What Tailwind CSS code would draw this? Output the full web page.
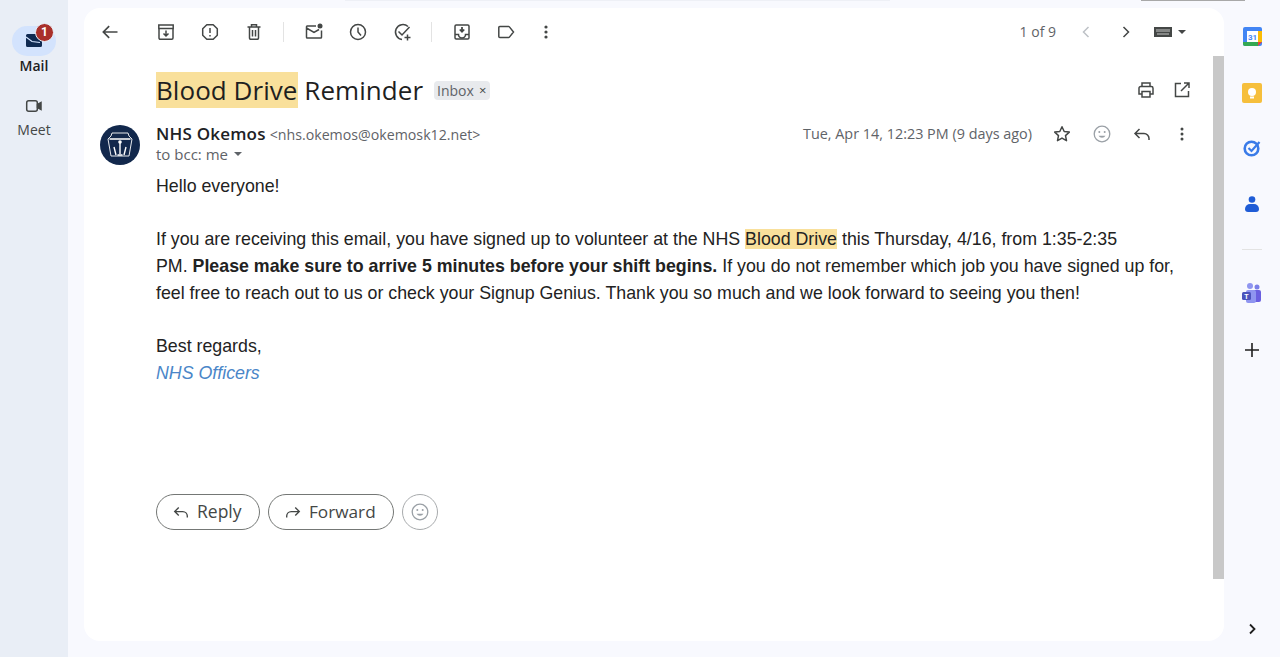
<!DOCTYPE html>
<html lang="en">
<head>
<meta charset="UTF-8" />
<title>Blood Drive Reminder</title>
<script src="https://cdn.jsdelivr.net/npm/@tailwindcss/browser@4"></script>
</head>
<body class="h-[657px] w-[1280px] overflow-hidden flex bg-[#f8f9fe] font-['Roboto',sans-serif] text-[#202124]">

  <!-- left rail -->
  <nav class="w-[68px] h-full bg-[#e9eef6] flex flex-col items-center pt-[26px] shrink-0">
    <div class="relative w-[44px] h-[30px] rounded-full bg-[#d3e3fd] flex items-center justify-center">
      <svg class="-mt-[1px]" width="16" height="13" viewBox="0 0 16 13"><path d="M0 1.500A1.500 1.500 0 0 1 1.500 0h13A1.500 1.500 0 0 1 16 1.500v10a1.500 1.500 0 0 1-1.500 1.500h-13A1.500 1.500 0 0 1 0 11.500z" fill="#0f2a52"/><path d="M0 3l6 4.500 8 1" fill="none" stroke="#d3e3fd" stroke-width="1.200"/></svg>
      <span class="absolute left-[24px] top-[-2px] w-[17px] h-[17px] rounded-full bg-[#a9302a] text-white text-[12px] font-bold leading-[17px] text-center border border-[#e9eef6] box-content -m-px">1</span>
    </div>
    <span class="font-['Open_Sans',sans-serif] text-[14px] font-semibold leading-[20px] text-[#1f1f1f]">Mail</span>
    <svg class="mt-[20px]" width="20" height="20" viewBox="0 0 20 20" fill="none" stroke="#444746" stroke-width="1.500"><rect x="2.700" y="4.700" width="10.600" height="10.600" rx="2"/><path d="M13.500 8.500l3.500-2v7l-3.500-2z" fill="#444746"/></svg>
    <span class="font-['Open_Sans',sans-serif] text-[14px] leading-[20px] mt-[4px] text-[#444746]">Meet</span>
  </nav>

  <!-- message card -->
  <main class="relative mt-[8px] ml-[16px] w-[1140px] h-[633px] bg-white rounded-[16px] overflow-hidden shrink-0">
    <!-- toolbar -->
    <div class="h-[48px] flex items-center pl-[16px] pr-[38px] text-[#444746]">
      <svg width="20" height="20" viewBox="0 0 24 24" fill="none" stroke="#444746" stroke-width="2"><path d="M21 12H4.500M11 5l-7 7 7 7"/></svg>
      <div class="flex items-center gap-[24px] ml-[36px]">
        <svg width="20" height="20" viewBox="0 0 20 20" fill="none" stroke="#444746" stroke-width="1.500"><path d="M3 6.500V16a1.200 1.200 0 0 0 1.200 1.200h11.600A1.200 1.200 0 0 0 17 16V6.500M2.800 3h14.400v3.500H2.800zM10 8.500v5M7.500 11.500l2.500 2.500 2.500-2.500"/></svg>
        <svg width="20" height="20" viewBox="0 0 20 20" fill="none" stroke="#444746" stroke-width="1.500"><path d="M6.800 2.700h6.400l4.100 4.100v6.400l-4.100 4.100H6.800l-4.100-4.100V6.800z" stroke-linejoin="round"/><path d="M10 6v5M10 13v1.500"/></svg>
        <svg width="20" height="20" viewBox="0 0 20 20" fill="none" stroke="#444746" stroke-width="1.500"><path d="M3.500 5h13M5.500 5v11a1.200 1.200 0 0 0 1.200 1.200h6.600a1.200 1.200 0 0 0 1.200-1.200V5M7.500 5V2.800h5V5M8.500 8v6.500M11.500 8v6.500"/></svg>
      </div>
      <div class="w-px h-[20px] bg-[#e3e3e3] ml-[19px] mr-[20px]"></div>
      <div class="flex items-center gap-[24px]">
        <svg width="20" height="20" viewBox="0 0 20 20" fill="none" stroke="#444746" stroke-width="1.500"><path d="M12 4H3.200A.8.800 0 0 0 2.500 4.800v10.400a.8.800 0 0 0 .8.800h13.400a.8.800 0 0 0 .8-.8V8.500M2.500 6l7.500 4.500L15 7.500"/><circle cx="16" cy="4" r="2.500" fill="#444746" stroke="none"/></svg>
        <svg width="20" height="20" viewBox="0 0 20 20" fill="none" stroke="#444746" stroke-width="1.500"><circle cx="10" cy="10" r="7.500"/><path d="M10 5.500V10l3 3.500"/></svg>
        <svg width="20" height="20" viewBox="0 0 20 20" fill="none" stroke="#444746" stroke-width="1.500"><path d="M16 4.500A7.500 7.500 0 1 0 10 17.500M6.500 9.500L10 13l7.500-8M15.500 12.500v6M12.500 15.500h6"/></svg>
      </div>
      <div class="w-px h-[20px] bg-[#e3e3e3] ml-[19px] mr-[20px]"></div>
      <div class="flex items-center gap-[24px]">
        <svg width="20" height="20" viewBox="0 0 20 20" fill="none" stroke="#444746" stroke-width="1.500"><rect x="3" y="3" width="14" height="14" rx="1.200"/><path d="M3 12.500h3.500a3.500 3.500 0 0 0 7 0H17"/><path d="M10 5v4.500M7.800 7.500L10 9.800l2.200-2.300" stroke-width="1.800"/></svg>
        <svg width="20" height="20" viewBox="0 0 20 20" fill="none" stroke="#444746" stroke-width="1.500"><path d="M3.800 4.500h8.800a1 1 0 0 1 .8.400L17.500 10l-4.100 5.100a1 1 0 0 1-.8.400H3.800a1 1 0 0 1-1-1v-9a1 1 0 0 1 1-1z"/></svg>
        <svg class="-ml-[4px]" width="20" height="20" viewBox="0 0 20 20" fill="#444746"><circle cx="10" cy="5" r="1.600"/><circle cx="10" cy="10" r="1.600"/><circle cx="10" cy="15" r="1.600"/></svg>
      </div>
      <span class="ml-auto -mt-[2px] font-['Open_Sans',sans-serif] text-[14px] text-[#5f6368]">1 of 9</span>
      <svg class="ml-[20px]" width="20" height="20" viewBox="0 0 20 20" fill="none" stroke="#bdc1c6" stroke-width="1.500"><path d="M12.500 5l-5 5 5 5"/></svg>
      <svg class="ml-[20px]" width="20" height="20" viewBox="0 0 20 20" fill="none" stroke="#444746" stroke-width="1.500"><path d="M7.500 5l5 5-5 5"/></svg>
      <svg class="ml-[18px]" width="18" height="10" viewBox="0 0 18 10"><rect width="18" height="10" fill="#444746"/><path d="M3 2v3M5 2v3M7 2v3M9 2v3M11 2v3M13 2v3M15 2v3M3 7h12" stroke="#fff" stroke-width=".7"/></svg>
      <span class="ml-[6px] w-0 h-0 border-x-[4px] border-x-transparent border-t-[4px] border-t-[#444746]"></span>
    </div>

    <!-- subject -->
    <div class="flex items-center h-[34px] mt-[17px] pl-[72px] pr-[32px]">
      <h1 class="text-[26px] tracking-[0.05px] leading-[34px] font-['Open_Sans',sans-serif] text-[#1f1f1f]"><span class="bg-[#f9e09b]">Blood Drive</span> Reminder</h1>
      <span class="ml-[11px] h-[19px] rounded-[4px] bg-[#e8eaed] pl-[3px] pr-[4px] flex items-center gap-[5px] font-['Open_Sans',sans-serif] text-[14px] text-[#5f6368]">Inbox <span class="text-[13px] leading-none text-[#444746]">×</span></span>
      <svg class="ml-auto" width="20" height="20" viewBox="0 0 20 20" fill="none" stroke="#444746" stroke-width="1.500"><path d="M6 6.500V3h8v3.500M6 14H3V8.200a1.700 1.700 0 0 1 1.700-1.700h10.600A1.700 1.700 0 0 1 17 8.200V14h-3M6 11.500h8V17H6z"/></svg>
      <svg class="ml-[16px]" width="20" height="20" viewBox="0 0 20 20" fill="none" stroke="#444746" stroke-width="1.500"><path d="M9 3.500H3.500v13h13V11M12 3h5v5M17 3l-8 8"/></svg>
    </div>

    <!-- sender -->
    <div class="flex pl-[16px] pr-[32px] mt-[18px] h-[40px]">
      <svg class="shrink-0" width="40" height="40" viewBox="0 0 40 40"><circle cx="20" cy="20" r="20" fill="#12284c"/><path d="M12 8h16l1 3 3 3-3 17H11L8 14l3-3z" fill="none" stroke="#fff" stroke-width=".9"/><path d="M9.500 14h21" stroke="#fff" stroke-width="1.300"/><path d="M20 17v12M17.500 30h5M14 22l2 8M26 22l-2 8" stroke="#fff" stroke-width="1.400"/><circle cx="20" cy="17" r="1.800" fill="#fff"/></svg>
      <div class="ml-[16px] flex flex-col font-['Open_Sans',sans-serif]">
        <div class="h-[20px] -mt-[1px] flex items-baseline leading-[20px]">
          <span class="text-[17px] tracking-[0.2px] font-semibold text-[#202124]">NHS Okemos</span>
          <span class="ml-[4px] text-[14.200px] text-[#5f6368]">&lt;nhs.okemos@okemosk12.net&gt;</span>
        </div>
        <div class="flex items-center h-[20px] text-[15px] text-[#5f6368]">to bcc: me<span class="ml-[6px] w-0 h-0 border-x-[4px] border-x-transparent border-t-[4px] border-t-[#5f6368]"></span></div>
      </div>
      <div class="ml-auto flex items-start h-[20px]">
        <span class="font-['Open_Sans',sans-serif] text-[14.400px] -mt-[1px] leading-[20px] text-[#5f6368]">Tue, Apr 14, 12:23 PM (9 days ago)</span>
        <svg class="ml-[20px] -mt-[1px]" width="20" height="20" viewBox="0 0 20 20" fill="none" stroke="#444746" stroke-width="1.500"><path d="M10 2.800l2.200 4.700 5.100.6-3.800 3.500 1 5.100-4.500-2.600-4.500 2.600 1-5.100L2.700 8.100l5.100-.6z" stroke-linejoin="round"/></svg>
        <svg class="ml-[20px] -mt-[1px]" width="20" height="20" viewBox="0 0 20 20" fill="none" stroke="#9aa0a6" stroke-width="1.300"><circle cx="10" cy="10" r="7.800"/><circle cx="7.300" cy="8" r="1" fill="#9aa0a6" stroke="none"/><circle cx="12.700" cy="8" r="1" fill="#9aa0a6" stroke="none"/><path d="M6.500 11.800a4 4 0 0 0 7 0z" fill="#9aa0a6" stroke="none"/></svg>
        <svg class="ml-[20px] -mt-[1px]" width="20" height="20" viewBox="0 0 20 20" fill="none" stroke="#444746" stroke-width="1.500"><path d="M7.500 5L3 9.500 7.500 14M3 9.500h9a5 5 0 0 1 5 5V16"/></svg>
        <svg class="ml-[20px] -mt-[1px]" width="20" height="20" viewBox="0 0 20 20" fill="#444746"><circle cx="10" cy="5" r="1.500"/><circle cx="10" cy="10" r="1.500"/><circle cx="10" cy="15" r="1.500"/></svg>
      </div>
    </div>

    <!-- body -->
    <div class="pl-[72px] w-[1110px] mt-[8px] font-['Liberation_Sans',sans-serif] text-[17.800px] leading-[26.700px] text-[#222222]">
      <p>Hello everyone!</p>
      <p class="mt-[26.700px]">If you are receiving this email, you have signed up to volunteer at the NHS <span class="bg-[#f9e09b]">Blood Drive</span> this Thursday, 4/16, from 1:35-2:35<br />PM. <b>Please make sure to arrive 5 minutes before your shift begins.</b> If you do not remember which job you have signed up for, feel free to reach out to us or check your Signup Genius. Thank you so much and we look forward to seeing you then!</p>
      <p class="mt-[26.700px]">Best regards,</p>
      <p class="italic text-[#4a86c8]">NHS Officers</p>
    </div>

    <!-- reply actions -->
    <div class="flex items-center gap-[8px] pl-[72px] mt-[107px] font-['Open_Sans',sans-serif]">
      <button class="h-[36px] w-[104px] rounded-full border border-[#747775] flex items-center pl-[15px] text-[17.500px] font-medium text-[#444746]">
        <svg width="18" height="18" viewBox="0 0 20 20" fill="none" stroke="#444746" stroke-width="1.500"><path d="M7.500 5L3 9.500 7.500 14M3 9.500h9a5 5 0 0 1 5 5V16"/></svg>
        <span class="ml-[7px]">Reply</span>
      </button>
      <button class="h-[36px] w-[126px] rounded-full border border-[#747775] flex items-center pl-[15px] text-[17.200px] font-medium text-[#444746]">
        <svg width="18" height="18" viewBox="0 0 20 20" fill="none" stroke="#444746" stroke-width="1.500"><path d="M12.500 5L17 9.500 12.500 14M17 9.500H8a5 5 0 0 0-5 5V16"/></svg>
        <span class="ml-[7px]">Forward</span>
      </button>
      <button class="w-[36px] h-[36px] rounded-full border border-[#a8abad] flex items-center justify-center">
        <svg width="20" height="20" viewBox="0 0 20 20" fill="none" stroke="#9aa0a6" stroke-width="1.300"><circle cx="10" cy="10" r="7.800"/><circle cx="7.300" cy="8" r="1" fill="#9aa0a6" stroke="none"/><circle cx="12.700" cy="8" r="1" fill="#9aa0a6" stroke="none"/><path d="M6.500 11.800a4 4 0 0 0 7 0z" fill="#9aa0a6" stroke="none"/></svg>
      </button>
    </div>

    <!-- scrollbar thumb -->
    <div class="absolute right-0 top-[48px] w-[11px] h-[523px] bg-[#c8c8c8]"></div>
  </main>

  <!-- right add-on rail -->
  <aside class="relative w-[56px] h-full flex flex-col items-center pt-[27px] shrink-0">
    <svg width="19" height="19" viewBox="0 0 19 19"><rect width="19" height="19" rx="2" fill="#4285f4"/><rect x="4" y="4" width="11" height="11" fill="#fff"/><path d="M0 15h15v4H2a2 2 0 0 1-2-2z" fill="#34a853"/><path d="M15 4h4v11h-4z" fill="#fbbc04"/><path d="M15 15h4l-4 4z" fill="#ea4335"/><text x="9.500" y="12.500" font-size="8" font-weight="700" text-anchor="middle" fill="#4285f4" font-family="Roboto">31</text></svg>
    <svg class="mt-[37px]" width="20" height="20" viewBox="0 0 20 20"><rect width="20" height="20" rx="2" fill="#f6bf3c"/><circle cx="10" cy="9" r="4" fill="#fff"/><rect x="8" y="13.500" width="4" height="2" fill="#fff"/></svg>
    <svg class="mt-[36px]" width="18" height="18" viewBox="0 0 18 18" fill="none"><circle cx="8.500" cy="9.500" r="6.800" stroke="#3a7be8" stroke-width="2.600"/><path d="M5.500 9l3 3L16.500 3" stroke="#3a7be8" stroke-width="2.200"/></svg>
    <svg class="mt-[39px]" width="14" height="17" viewBox="0 0 14 17"><circle cx="7" cy="3.500" r="3.300" fill="#1f5cd6"/><path d="M0 13a5 5 0 0 1 5-5h4a5 5 0 0 1 5 5 3 3 0 0 1-3 3H3a3 3 0 0 1-3-3z" fill="#1f5cd6"/></svg>
    <div class="w-[20px] h-px bg-[#e3e3e3] mt-[36px]"></div>
    <svg class="mt-[33px]" width="20" height="20" viewBox="0 0 20 20"><circle cx="8" cy="3" r="3" fill="#8f95f0"/><circle cx="15" cy="4" r="2.500" fill="#7b7fe8"/><rect x="11" y="7" width="8" height="12" rx="2" fill="#6a5fe0"/><rect x="4" y="7" width="10" height="13" rx="2" fill="#8f95f0"/><rect x="0" y="9" width="9" height="8" rx="1.500" fill="#4b53bc"/><text x="4.500" y="15.500" font-size="7" font-weight="700" text-anchor="middle" fill="#fff" font-family="Roboto">T</text></svg>
    <svg class="mt-[40px]" width="14" height="14" viewBox="0 0 14 14" stroke="#1f1f1f" stroke-width="1.600"><path d="M7 0v14M0 7h14"/></svg>
    <svg class="absolute left-[22px] top-[623px]" width="12" height="12" viewBox="0 0 12 12" fill="none" stroke="#1f1f1f" stroke-width="1.800"><path d="M4 1.500L8.500 6 4 10.500"/></svg>
  </aside>

  <!-- edge of the browser chrome above the page -->
  <div class="absolute top-0 left-[345px] w-[545px] h-px bg-[#eef0f6]"></div>
  <div class="absolute top-0 left-[1141px] w-[104px] h-px bg-[#a8a8a8]"></div>
</body>
</html>
